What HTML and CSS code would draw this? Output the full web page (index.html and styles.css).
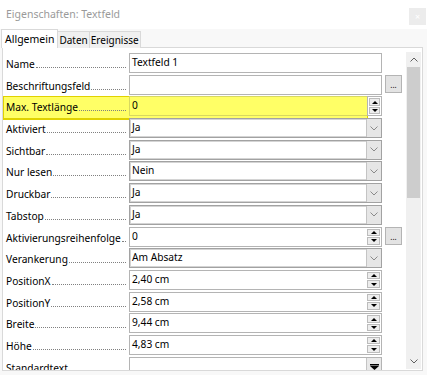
FILE: index.html
```html
<!DOCTYPE html>
<html lang="de">
<head>
    <meta charset="UTF-8">
    <meta name="viewport" content="width=device-width, initial-scale=1.0">
    <title>Eigenschaften: Textfeld</title>
    <link rel="stylesheet" href="styles.css">
</head>
<body>
    <div class="titlebar">
        <span class="title">Eigenschaften: Textfeld</span>
        <span class="close">×</span>
    </div>

    <div class="tabs">
        <span class="tab active">Allgemein</span>
        <span class="tab">Daten</span>
        <span class="tab">Ereignisse</span>
    </div>

    <div class="panel">
        <div class="props">
            <div class="row">
                <span class="label"><span>Name</span><span class="dots"></span></span>
                <div class="field"><span class="val">Textfeld 1</span></div>
            </div>
            <div class="row">
                <span class="label"><span>Beschriftungsfeld</span><span class="dots"></span></span>
                <div class="field"><span class="val"></span></div>
                <span class="more">...</span>
            </div>
            <!-- aktuell markierte Eigenschaft -->
            <div class="row hl">
                <span class="label"><span>Max. Textlänge</span><span class="dots"></span></span>
                <div class="field"><span class="val">0</span><span class="spin"><span class="up"></span><span class="down"></span></span></div>
            </div>
            <div class="row">
                <span class="label"><span>Aktiviert</span><span class="dots"></span></span>
                <div class="field combo"><span class="val">Ja</span><span class="drop"><svg width="8" height="5" viewBox="0 0 8 5"><path d="M0.5 0.5L4 4L7.5 0.5" fill="none" stroke="#8a8a8a"/></svg></span></div>
            </div>
            <div class="row">
                <span class="label"><span>Sichtbar</span><span class="dots"></span></span>
                <div class="field combo"><span class="val">Ja</span><span class="drop"><svg width="8" height="5" viewBox="0 0 8 5"><path d="M0.5 0.5L4 4L7.5 0.5" fill="none" stroke="#8a8a8a"/></svg></span></div>
            </div>
            <div class="row">
                <span class="label"><span>Nur lesen</span><span class="dots"></span></span>
                <div class="field combo"><span class="val">Nein</span><span class="drop"><svg width="8" height="5" viewBox="0 0 8 5"><path d="M0.5 0.5L4 4L7.5 0.5" fill="none" stroke="#8a8a8a"/></svg></span></div>
            </div>
            <div class="row">
                <span class="label"><span>Druckbar</span><span class="dots"></span></span>
                <div class="field combo"><span class="val">Ja</span><span class="drop"><svg width="8" height="5" viewBox="0 0 8 5"><path d="M0.5 0.5L4 4L7.5 0.5" fill="none" stroke="#8a8a8a"/></svg></span></div>
            </div>
            <div class="row">
                <span class="label"><span>Tabstop</span><span class="dots"></span></span>
                <div class="field combo"><span class="val">Ja</span><span class="drop"><svg width="8" height="5" viewBox="0 0 8 5"><path d="M0.5 0.5L4 4L7.5 0.5" fill="none" stroke="#8a8a8a"/></svg></span></div>
            </div>
            <div class="row">
                <span class="label"><span>Aktivierungsreihenfolge</span><span class="dots"></span></span>
                <div class="field"><span class="val">0</span><span class="spin"><span class="up"></span><span class="down"></span></span></div>
                <span class="more">...</span>
            </div>
            <div class="row">
                <span class="label"><span>Verankerung</span><span class="dots"></span></span>
                <div class="field combo"><span class="val">Am Absatz</span><span class="drop"><svg width="8" height="5" viewBox="0 0 8 5"><path d="M0.5 0.5L4 4L7.5 0.5" fill="none" stroke="#8a8a8a"/></svg></span></div>
            </div>
            <div class="row">
                <span class="label"><span>PositionX</span><span class="dots"></span></span>
                <div class="field"><span class="val">2,40 cm</span><span class="spin"><span class="up"></span><span class="down"></span></span></div>
            </div>
            <div class="row">
                <span class="label"><span>PositionY</span><span class="dots"></span></span>
                <div class="field"><span class="val">2,58 cm</span><span class="spin"><span class="up"></span><span class="down"></span></span></div>
            </div>
            <div class="row">
                <span class="label"><span>Breite</span><span class="dots"></span></span>
                <div class="field"><span class="val">9,44 cm</span><span class="spin"><span class="up"></span><span class="down"></span></span></div>
            </div>
            <div class="row">
                <span class="label"><span>Höhe</span><span class="dots"></span></span>
                <div class="field"><span class="val">4,83 cm</span><span class="spin"><span class="up"></span><span class="down"></span></span></div>
            </div>
            <div class="row">
                <span class="label"><span>Standardtext</span><span class="dots"></span></span>
                <div class="field"><span class="val"></span><span class="drop dark"><svg width="9" height="6" viewBox="0 0 9 6"><path d="M0 0H9V1.5H0Z M0 2H9L4.5 6Z" fill="#000"/></svg></span></div>
            </div>
        </div>

        <div class="scrollbar">
            <span class="arrow"><svg width="8" height="5" viewBox="0 0 8 5"><path d="M0.5 4.5L4 1L7.5 4.5" fill="none" stroke="#606060"/></svg></span>
            <span class="thumb"></span>
            <span class="track"></span>
            <span class="arrow"><svg width="8" height="5" viewBox="0 0 8 5"><path d="M0.5 0.5L4 4L7.5 0.5" fill="none" stroke="#606060"/></svg></span>
        </div>
    </div>
</body>
</html>
```

FILE: styles.css
```css
* {
    box-sizing: border-box;
}
body {
    margin: 0;
    width: 427px;
    height: 375px;
    overflow: hidden;
    background-color: #f8f8f8;
    font-family: "Noto Sans", "Segoe UI", sans-serif;
    font-size: 10.2px;
    color: #000;
}
.titlebar {
    height: 29px;
    display: flex;
    align-items: center;
    justify-content: space-between;
    padding: 0 1px 0 6px;
    background-color: #fff;
}
.title {
    color: #9a9a9a;
    font-size: 10.5px;
    margin-top: -2px;
}
.close {
    width: 17px;
    height: 17px;
    margin-top: 3px;
    display: flex;
    align-items: center;
    justify-content: center;
    background-color: #ececec;
    color: #fff;
    font-size: 9px;
}
.tabs {
    display: flex;
    align-items: flex-end;
    height: 19px;
    padding-left: 1px;
    position: relative;
    z-index: 1;
    margin-bottom: -1px;
}
.tab {
    height: 17px;
    padding: 0 1px;
    line-height: 16px;
    font-size: 10px;
    background-color: #f0f0f0;
    border: 1px solid #d9d9d9;
    border-bottom: none;
    margin-left: -1px;
}
.tab.active {
    height: 19px;
    padding: 0 3px;
    line-height: 18px;
    font-size: 10.5px;
    background-color: #fff;
    margin-left: 0;
}
.panel {
    display: flex;
    height: 324px;
    margin: 0 4px 0 2px;
    background-color: #fff;
    border: 1px solid #d9d9d9;
    overflow: hidden;
}
.props {
    flex: 1;
    padding-top: 5px;
}
.row {
    position: relative;
    display: grid;
    grid-template-columns: 120px 253px 17px;
    column-gap: 3px;
    align-items: start;
    height: 21.7px;
    padding-left: 3px;
}
.label {
    position: relative;
    display: flex;
    align-items: flex-end;
    height: 20px;
    line-height: 17px;
    white-space: nowrap;
}
.dots {
    flex: 1;
    min-width: 3px;
    margin: 0 0 5px 1px;
    border-bottom: 1px dotted #808080;
}
.field {
    position: relative;
    display: flex;
    height: 20px;
    border: 1px solid #b4b4b4;
    background-color: #fff;
}
.field.combo {
    border-color: #a2a2a2;
    box-shadow: inset 0 0 0 1px #d4d4d4;
}
.val {
    flex: 1;
    padding-left: 2px;
    line-height: 17px;
}
.drop {
    width: 15px;
    display: flex;
    align-items: center;
    justify-content: center;
    background-color: #e6e6e6;
    border-left: 1px solid #c4c4c4;
}
.drop.dark {
    background-color: #e9e9e9;
}
.spin {
    width: 15px;
    display: flex;
    flex-direction: column;
    gap: 1px;
    padding: 1px;
}
.spin span {
    flex: 1;
    display: flex;
    align-items: center;
    justify-content: center;
    background-color: #ededed;
    border: 1px solid #bcbcbc;
}
.spin .up::after {
    content: "";
    border-left: 3px solid transparent;
    border-right: 3px solid transparent;
    border-bottom: 3px solid #000;
}
.spin .down::after {
    content: "";
    border-left: 3px solid transparent;
    border-right: 3px solid transparent;
    border-top: 3px solid #000;
}
.more {
    height: 18px;
    display: flex;
    align-items: flex-end;
    justify-content: center;
    padding-bottom: 3px;
    background-color: #e3e3e3;
    border: 1px solid #b4b4b4;
    font-size: 8px;
    line-height: 8px;
}

/* gelbe Markierung der aktiven Zeile */
.row.hl::before {
    content: "";
    position: absolute;
    left: 0;
    top: 0;
    width: 363px;
    height: 21px;
    background-color: #ffff66;
    border: 1px solid #e0d200;
    border-bottom-width: 2px;
}
.row.hl .field {
    background-color: transparent;
    border-color: #d8d860;
}
.row.hl .spin {
    margin: -1px -1px -1px 0;
    background-color: #fff;
    border: 1px solid #b4b4b4;
}

.scrollbar {
    width: 15px;
    margin: 4px 1px 1px 0;
    display: flex;
    flex-direction: column;
    background-color: #f0f0f0;
}
.arrow {
    height: 15px;
    display: flex;
    align-items: center;
    justify-content: center;
}
.thumb {
    height: 131px;
    margin: 0 1px;
    background-color: #cdcdcd;
}
.track {
    flex: 1;
}
```
